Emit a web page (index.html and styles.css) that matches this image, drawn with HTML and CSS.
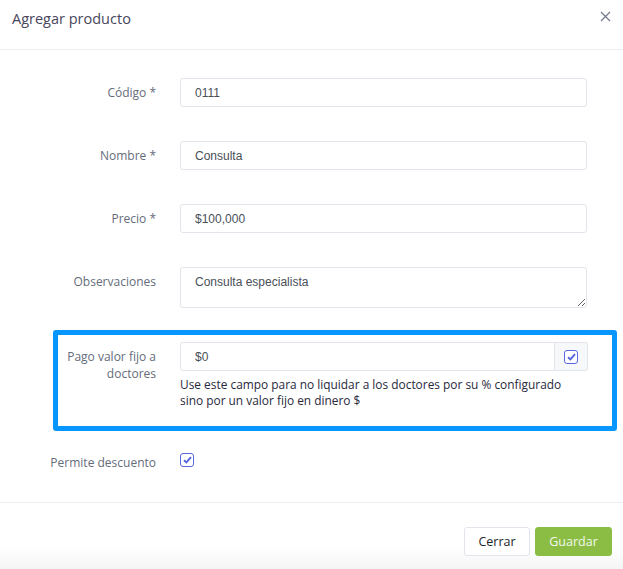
FILE: index.html
```html
<!DOCTYPE html>
<html lang="es">
<head>
<meta charset="utf-8">
<title>Agregar producto</title>
<link rel="stylesheet" href="styles.css">
</head>
<body>
<div class="modal">
  <div class="modal-header">
    <h5 class="modal-title">Agregar producto</h5>
    <button class="close" type="button" aria-label="Cerrar">
      <svg width="11" height="11" viewBox="0 0 11 11"><path d="M1 1L10 10M10 1L1 10" stroke="#74788d" stroke-width="1.2" fill="none"/></svg>
    </button>
  </div>
  <div class="modal-body">
    <div class="row">
      <label class="lbl">Código *</label>
      <input class="ctl" type="text" value="0111">
    </div>
    <div class="row">
      <label class="lbl">Nombre *</label>
      <input class="ctl" type="text" value="Consulta">
    </div>
    <div class="row">
      <label class="lbl">Precio *</label>
      <input class="ctl" type="text" value="$100,000">
    </div>
    <div class="row">
      <label class="lbl">Observaciones</label>
      <textarea class="ctl area">Consulta especialista</textarea>
    </div>
    <div class="row highlight">
      <label class="lbl two">Pago valor fijo a doctores</label>
      <div class="field">
        <div class="group">
          <input class="ctl grow" type="text" value="$0">
          <span class="addon"><span class="chk"><svg width="9" height="8" viewBox="0 0 9 8"><path d="M1 4.2L3.4 6.4L8 1.2" stroke="#5867dd" stroke-width="2" fill="none"/></svg></span></span>
        </div>
        <p class="help">Use este campo para no liquidar a los doctores por su % configurado sino por un valor fijo en dinero $</p>
      </div>
    </div>
    <div class="row check-row">
      <label class="lbl">Permite descuento</label>
      <span class="chk"><svg width="9" height="8" viewBox="0 0 9 8"><path d="M1 4.2L3.4 6.4L8 1.2" stroke="#5867dd" stroke-width="2" fill="none"/></svg></span>
    </div>
  </div>
  <div class="modal-footer">
    <button class="btn btn-light" type="button">Cerrar</button>
    <button class="btn btn-green" type="button">Guardar</button>
  </div>
</div>
</body>
</html>
```

FILE: styles.css
```css
html, body {
  margin: 0;
  padding: 0;
  background: #ffffff;
}
body {
  width: 623px;
  height: 569px;
  overflow: hidden;
  font-family: "Open Sans", "Liberation Sans", sans-serif;
}
.modal {
  display: flex;
  flex-direction: column;
  height: 569px;
}
.modal-header {
  height: 49px;
  border-bottom: 1px solid #ebedf2;
  display: flex;
  align-items: flex-start;
  justify-content: space-between;
  padding: 0 11px 0 12px;
}
.modal-title {
  margin: 9px 0 0;
  font-size: 14.5px;
  font-weight: 400;
  color: #48465b;
}
.close {
  margin-top: 11px;
  border: 0;
  background: none;
  padding: 0;
  width: 12px;
  height: 12px;
  display: flex;
}
.modal-body {
  padding-top: 28px;
  display: flex;
  flex-direction: column;
  gap: 34px;
}
.row {
  display: grid;
  grid-template-columns: 156px 407px;
  column-gap: 24px;
  align-items: start;
}
.lbl {
  text-align: right;
  font-size: 12px;
  color: #646c7a;
  line-height: 17px;
  padding-top: 6px;
}
.ctl {
  box-sizing: border-box;
  width: 407px;
  height: 29px;
  border: 1px solid #e2e5ec;
  border-radius: 3px;
  padding: 0 14px;
  font-family: "Liberation Sans", Arial, sans-serif;
  font-size: 12px;
  color: #495057;
  background: #fff;
  margin: 0;
  outline: none;
}
.area {
  height: 41px;
  padding-top: 7px;
  resize: vertical;
  display: block;
}
.highlight {
  margin: -12px 0 0 53px;
  width: 564px;
  box-sizing: border-box;
  border: 5px solid #0796fd;
  border-radius: 3px;
  padding: 7px 0 18px;
  grid-template-columns: 98px 407px;
}
.highlight .lbl {
  padding-top: 6px;
}
.field {
  display: flex;
  flex-direction: column;
}
.group {
  display: flex;
  width: 408px;
}
.grow {
  width: auto;
  flex: 1;
  border-radius: 3px 0 0 3px;
}
.addon {
  width: 33px;
  height: 29px;
  box-sizing: border-box;
  border: 1px solid #e2e5ec;
  border-left: 0;
  border-radius: 0 3px 3px 0;
  background: #f7f8fa;
  display: flex;
  align-items: center;
  justify-content: center;
}
.chk {
  box-sizing: border-box;
  width: 14px;
  height: 14px;
  border: 1px solid #5867dd;
  border-radius: 3px;
  background: #fff;
  display: flex;
  align-items: center;
  justify-content: center;
}
.help {
  margin: 5px 0 0;
  font-size: 11.9px;
  line-height: 16px;
  color: #282a3c;
}
.check-row {
  margin-top: -11px;
  align-items: center;
}
.check-row .lbl {
  padding-top: 0;
}
.check-row .chk {
  margin-top: -5px;
}
.modal-footer {
  margin-top: auto;
  height: 67px;
  border-top: 1px solid #ebedf2;
  display: flex;
  justify-content: flex-end;
  align-items: flex-start;
  gap: 5px;
  padding: 24px 11px 0 0;
  box-sizing: border-box;
  background: linear-gradient(to bottom, #ffffff 0px, #ffffff 44px, #f4f4f4 67px);
}
.btn {
  height: 29px;
  border-radius: 3px;
  font-family: "Open Sans", "Liberation Sans", sans-serif;
  font-size: 12.5px;
  padding: 0;
  cursor: pointer;
}
.btn-light {
  width: 66px;
  background: #fff;
  border: 1px solid #e2e5ec;
  color: #212529;
}
.btn-green {
  width: 77px;
  background: #8bbd45;
  border: 1px solid #8bbd45;
  color: #f3f8ec;
}
```
